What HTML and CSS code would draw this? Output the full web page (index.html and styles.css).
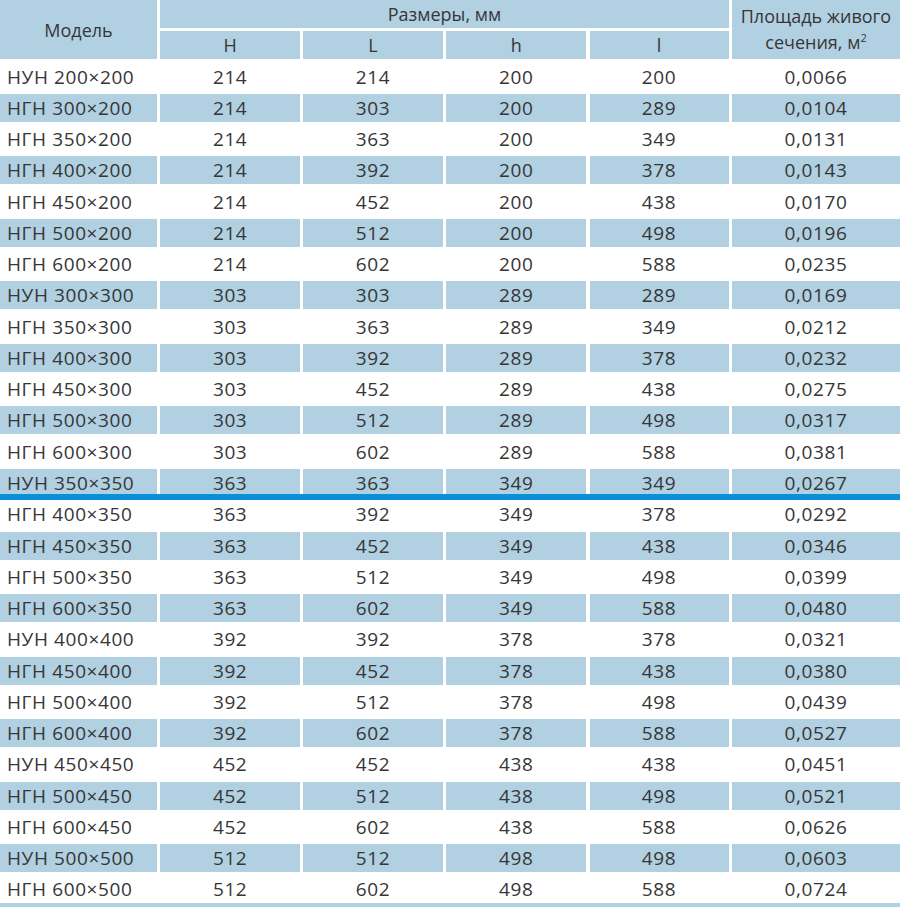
FILE: index.html
```html
<!DOCTYPE html>
<html lang="ru">
<head>
<meta charset="utf-8">
<title>Таблица размеров</title>
<link rel="stylesheet" href="styles.css">
</head>
<body>
<div class="table">
  <div class="grid head">
    <div class="cell model-h">Модель</div>
    <div class="cell sizes-h">Размеры, мм</div>
    <div class="cell area-h">Площадь живого<br>сечения, м<sup>2</sup></div>
    <div class="cell">H</div>
    <div class="cell">L</div>
    <div class="cell">h</div>
    <div class="cell">l</div>
  </div>
  <div class="grid body">
    <div class="row"><div class="cell name">НУН 200×200</div><div class="cell">214</div><div class="cell">214</div><div class="cell">200</div><div class="cell">200</div><div class="cell">0,0066</div></div>
    <div class="row alt"><div class="cell name">НГН 300×200</div><div class="cell">214</div><div class="cell">303</div><div class="cell">200</div><div class="cell">289</div><div class="cell">0,0104</div></div>
    <div class="row"><div class="cell name">НГН 350×200</div><div class="cell">214</div><div class="cell">363</div><div class="cell">200</div><div class="cell">349</div><div class="cell">0,0131</div></div>
    <div class="row alt"><div class="cell name">НГН 400×200</div><div class="cell">214</div><div class="cell">392</div><div class="cell">200</div><div class="cell">378</div><div class="cell">0,0143</div></div>
    <div class="row"><div class="cell name">НГН 450×200</div><div class="cell">214</div><div class="cell">452</div><div class="cell">200</div><div class="cell">438</div><div class="cell">0,0170</div></div>
    <div class="row alt"><div class="cell name">НГН 500×200</div><div class="cell">214</div><div class="cell">512</div><div class="cell">200</div><div class="cell">498</div><div class="cell">0,0196</div></div>
    <div class="row"><div class="cell name">НГН 600×200</div><div class="cell">214</div><div class="cell">602</div><div class="cell">200</div><div class="cell">588</div><div class="cell">0,0235</div></div>
    <div class="row alt"><div class="cell name">НУН 300×300</div><div class="cell">303</div><div class="cell">303</div><div class="cell">289</div><div class="cell">289</div><div class="cell">0,0169</div></div>
    <div class="row"><div class="cell name">НГН 350×300</div><div class="cell">303</div><div class="cell">363</div><div class="cell">289</div><div class="cell">349</div><div class="cell">0,0212</div></div>
    <div class="row alt"><div class="cell name">НГН 400×300</div><div class="cell">303</div><div class="cell">392</div><div class="cell">289</div><div class="cell">378</div><div class="cell">0,0232</div></div>
    <div class="row"><div class="cell name">НГН 450×300</div><div class="cell">303</div><div class="cell">452</div><div class="cell">289</div><div class="cell">438</div><div class="cell">0,0275</div></div>
    <div class="row alt"><div class="cell name">НГН 500×300</div><div class="cell">303</div><div class="cell">512</div><div class="cell">289</div><div class="cell">498</div><div class="cell">0,0317</div></div>
    <div class="row"><div class="cell name">НГН 600×300</div><div class="cell">303</div><div class="cell">602</div><div class="cell">289</div><div class="cell">588</div><div class="cell">0,0381</div></div>
    <div class="row alt short"><div class="cell name">НУН 350×350</div><div class="cell">363</div><div class="cell">363</div><div class="cell">349</div><div class="cell">349</div><div class="cell">0,0267</div></div>
  </div>
  <div class="divider"></div>
  <div class="grid body">
    <div class="row"><div class="cell name">НГН 400×350</div><div class="cell">363</div><div class="cell">392</div><div class="cell">349</div><div class="cell">378</div><div class="cell">0,0292</div></div>
    <div class="row alt"><div class="cell name">НГН 450×350</div><div class="cell">363</div><div class="cell">452</div><div class="cell">349</div><div class="cell">438</div><div class="cell">0,0346</div></div>
    <div class="row"><div class="cell name">НГН 500×350</div><div class="cell">363</div><div class="cell">512</div><div class="cell">349</div><div class="cell">498</div><div class="cell">0,0399</div></div>
    <div class="row alt"><div class="cell name">НГН 600×350</div><div class="cell">363</div><div class="cell">602</div><div class="cell">349</div><div class="cell">588</div><div class="cell">0,0480</div></div>
    <div class="row"><div class="cell name">НУН 400×400</div><div class="cell">392</div><div class="cell">392</div><div class="cell">378</div><div class="cell">378</div><div class="cell">0,0321</div></div>
    <div class="row alt"><div class="cell name">НГН 450×400</div><div class="cell">392</div><div class="cell">452</div><div class="cell">378</div><div class="cell">438</div><div class="cell">0,0380</div></div>
    <div class="row"><div class="cell name">НГН 500×400</div><div class="cell">392</div><div class="cell">512</div><div class="cell">378</div><div class="cell">498</div><div class="cell">0,0439</div></div>
    <div class="row alt"><div class="cell name">НГН 600×400</div><div class="cell">392</div><div class="cell">602</div><div class="cell">378</div><div class="cell">588</div><div class="cell">0,0527</div></div>
    <div class="row"><div class="cell name">НУН 450×450</div><div class="cell">452</div><div class="cell">452</div><div class="cell">438</div><div class="cell">438</div><div class="cell">0,0451</div></div>
    <div class="row alt"><div class="cell name">НГН 500×450</div><div class="cell">452</div><div class="cell">512</div><div class="cell">438</div><div class="cell">498</div><div class="cell">0,0521</div></div>
    <div class="row"><div class="cell name">НГН 600×450</div><div class="cell">452</div><div class="cell">602</div><div class="cell">438</div><div class="cell">588</div><div class="cell">0,0626</div></div>
    <div class="row alt"><div class="cell name">НУН 500×500</div><div class="cell">512</div><div class="cell">512</div><div class="cell">498</div><div class="cell">498</div><div class="cell">0,0603</div></div>
    <div class="row"><div class="cell name">НГН 600×500</div><div class="cell">512</div><div class="cell">602</div><div class="cell">498</div><div class="cell">588</div><div class="cell">0,0724</div></div>
  </div>
</div>
</body>
</html>
```
FILE: styles.css
```css
html, body {
  margin: 0;
  padding: 0;
  background: #ffffff;
}

body {
  font-family: "Open Sans", "Noto Sans", sans-serif;
  font-size: 18px;
  color: #363636;
  width: 900px;
  overflow: hidden;
}

.table {
  display: flex;
  flex-direction: column;
  width: 900px;
  border-bottom: 4px solid #b1d0e2;
}

.grid {
  display: grid;
  grid-template-columns: 157px 139.5px 139.5px 140px 139px 1fr;
  column-gap: 3.4px;
  row-gap: 3.25px;
}

.head {
  grid-template-rows: 28px 28px;
}

.head .cell {
  background: #b1d0e2;
}

.body {
  margin-top: 3.25px;
  font-size: 19px;
  letter-spacing: 0.6px;
}

.divider + .body {
  margin-top: 0;
}

.row {
  display: contents;
}

.cell {
  height: 28px;
  line-height: 28px;
  text-align: center;
  white-space: nowrap;
}

.row.alt .cell {
  background: #b1d0e2;
}

.row.short .cell {
  height: 25.5px;
  line-height: 28px;
  overflow: visible;
}

.cell.name {
  text-align: left;
  padding-left: 7px;
}

.model-h {
  grid-row: 1 / span 2;
  grid-column: 1;
  height: auto;
  display: flex;
  align-items: center;
  justify-content: center;
}

.sizes-h {
  grid-column: 2 / span 4;
  grid-row: 1;
}

.area-h {
  grid-column: 6;
  grid-row: 1 / span 2;
  height: auto;
  line-height: 26px;
  padding-top: 3px;
  box-sizing: border-box;
}

.area-h sup {
  font-size: 11px;
  line-height: 0;
  vertical-align: 7px;
}

.divider {
  height: 6.2px;
  background: #0a8fd8;
}
```
